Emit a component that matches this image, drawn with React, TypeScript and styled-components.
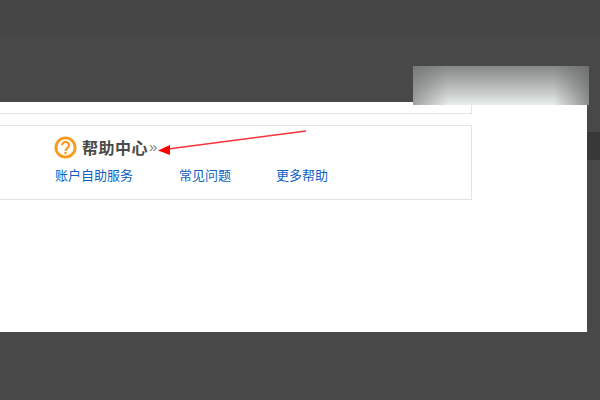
import React from 'react';
import styled, { createGlobalStyle } from 'styled-components';

const GlobalStyle = createGlobalStyle`
  html, body {
    margin: 0;
    padding: 0;
    width: 600px;
    height: 400px;
    overflow: hidden;
    background: #484848;
  }
`;

const Page = styled.div`
  position: relative;
  width: 600px;
  height: 400px;
  display: flex;
  flex-direction: column;
  background: #484848;
  font-family: "Liberation Sans", "Noto Sans CJK SC", sans-serif;
`;

const TopBand = styled.div`
  height: 36px;
  flex: none;
  background: #454545;
`;

const Spacer = styled.div`
  height: 66px;
  flex: none;
`;

const Middle = styled.div`
  display: flex;
  height: 230px;
  flex: none;
`;

const Sheet = styled.div`
  width: 587px;
  flex: none;
  background: #fff;
`;

const SideColumn = styled.div`
  flex: 1;
  padding-top: 30px;
`;

const SideTab = styled.div`
  height: 28px;
  background: #383838;
`;

const PrevPanel = styled.div`
  width: 472px;
  height: 12px;
  box-sizing: border-box;
  border-right: 1px solid #e4e4e4;
  border-bottom: 1px solid #e4e4e4;
`;

const HelpPanel = styled.section`
  width: 472px;
  height: 75px;
  margin-top: 11px;
  box-sizing: border-box;
  border: 1px solid #e4e4e4;
  border-left: none;
  padding: 9px 0 0 54px;
`;

const HelpHeader = styled.div`
  display: flex;
  align-items: center;
  height: 24px;
`;

const HelpTitle = styled.h3`
  margin: 0 0 0 5px;
  font-size: 16px;
  line-height: 24px;
  font-weight: 700;
  letter-spacing: 0.5px;
  color: #4a4a4a;
  font-family: "Noto Sans CJK SC", sans-serif;
`;

const More = styled.span`
  margin-left: 1px;
  font-size: 15px;
  line-height: 24px;
  color: #808080;
  font-family: "Liberation Sans", sans-serif;
`;

const LinkRow = styled.div`
  display: flex;
  margin: 6px 0 0 1px;
`;

const HelpLink = styled.a<{ $width: number }>`
  width: ${(p) => p.$width}px;
  flex: none;
  font-size: 13px;
  line-height: 19px;
  color: #0f5fc4;
  text-decoration: none;
  white-space: nowrap;
  font-family: "Noto Sans CJK SC", sans-serif;
`;

const BlurPatch = styled.div`
  position: absolute;
  left: 413px;
  top: 66px;
  width: 176px;
  height: 39px;
  background:
    linear-gradient(90deg, rgba(110, 112, 110, 0.6) 0%, rgba(110, 112, 110, 0) 20%, rgba(100, 102, 100, 0) 80%, rgba(100, 102, 100, 0.7) 100%),
    linear-gradient(180deg, #858886 0%, #b4b8b6 50%, #e8eeec 100%);
`;

const ArrowLayer = styled.svg`
  position: absolute;
  left: 150px;
  top: 125px;
`;

const HelpIcon = () => (
  <svg width="23" height="23" viewBox="0 0 23 23">
    <circle cx="11.5" cy="11.5" r="9.6" fill="#fff" stroke="#f79a1e" strokeWidth="2.8" />
    <path d="M8 9.2a3.5 3.3 0 1 1 5.6 2.7c-1.3 1-2.1 1.5-2.1 3" fill="none" stroke="#f79a1e" strokeWidth="2.2" />
    <rect x="10.4" y="16" width="2.2" height="2.2" fill="#f79a1e" />
  </svg>
);

const App: React.FC = () => {
  return (
    <Page>
      <GlobalStyle />
      <TopBand />
      <Spacer />
      <Middle>
        <Sheet>
          <PrevPanel />
          <HelpPanel>
            <HelpHeader>
              <HelpIcon />
              <HelpTitle>帮助中心</HelpTitle>
              <More>»</More>
            </HelpHeader>
            <LinkRow>
              <HelpLink $width={124}>账户自助服务</HelpLink>
              <HelpLink $width={97}>常见问题</HelpLink>
              <HelpLink $width={60}>更多帮助</HelpLink>
            </LinkRow>
          </HelpPanel>
        </Sheet>
        <SideColumn>
          <SideTab />
        </SideColumn>
      </Middle>
      <BlurPatch />
      <ArrowLayer width="160" height="35" viewBox="0 0 160 35">
        <line x1="156" y1="6" x2="18" y2="24" stroke="#f5323c" strokeWidth="1.4" />
        <path d="M8 25.5L20 20L20 30Z" fill="#f00" />
      </ArrowLayer>
    </Page>
  );
};

export default App;
